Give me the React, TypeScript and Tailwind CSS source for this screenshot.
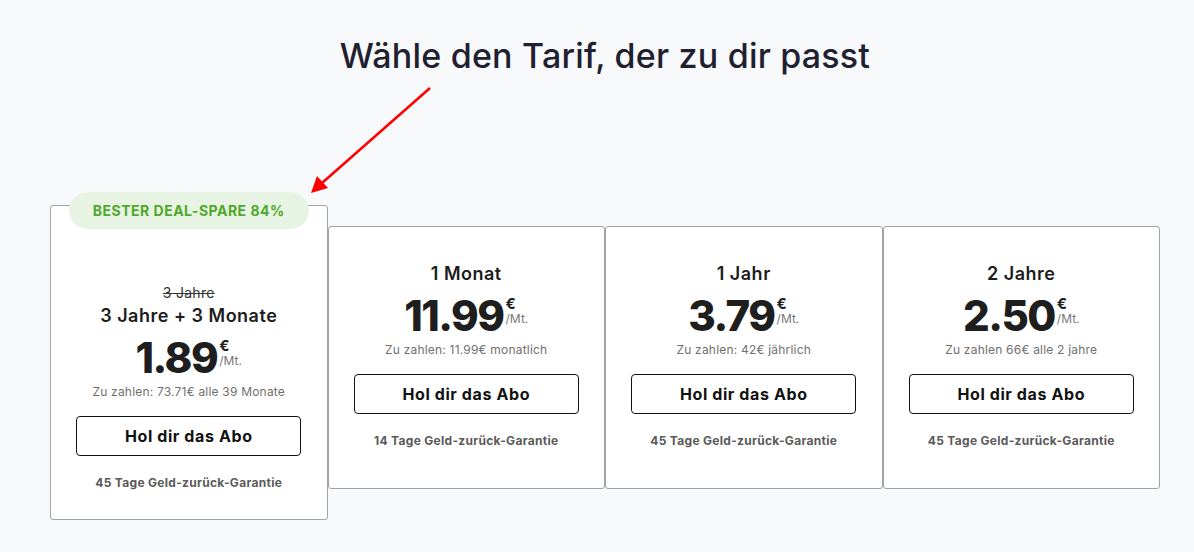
import React from "react";

type Plan = {
  title: string;
  old?: string;
  price: string;
  pay: string;
  guarantee: string;
  best?: boolean;
};

const plans: Plan[] = [
  {
    title: "3 Jahre + 3 Monate",
    old: "3 Jahre",
    price: "1.89",
    pay: "Zu zahlen: 73.71€ alle 39 Monate",
    guarantee: "45 Tage Geld-zurück-Garantie",
    best: true,
  },
  {
    title: "1 Monat",
    price: "11.99",
    pay: "Zu zahlen: 11.99€ monatlich",
    guarantee: "14 Tage Geld-zurück-Garantie",
  },
  {
    title: "1 Jahr",
    price: "3.79",
    pay: "Zu zahlen: 42€ jährlich",
    guarantee: "45 Tage Geld-zurück-Garantie",
  },
  {
    title: "2 Jahre",
    price: "2.50",
    pay: "Zu zahlen 66€ alle 2 jahre",
    guarantee: "45 Tage Geld-zurück-Garantie",
  },
];

function Card({ p }: { p: Plan }) {
  return (
    <div
      className={
        "relative flex flex-col items-center bg-white border border-[#a3a3a3] rounded-[3px] " +
        (p.best ? "pt-[78px] pb-[28px]" : "mt-[21px] pt-[35px] pb-[39px]")
      }
    >
      {p.best && (
        <div className="absolute top-[-14px] left-1/2 -translate-x-1/2 w-[240px] h-[37px] rounded-full bg-[#e8f4e3] flex items-center justify-center text-[14px] font-bold text-[#50a82b] tracking-[0.5px]">
          BESTER DEAL-SPARE 84%
        </div>
      )}
      {p.old && (
        <div className="text-[14px] leading-[18px] text-[#333] line-through mb-[2px] tracking-[0.3px]">{p.old}</div>
      )}
      <div className="text-[18px] leading-[24px] font-semibold text-[#1c1c1c] tracking-[0.5px]">{p.title}</div>
      <div className="mt-[8px] flex items-start h-[44px]">
        <span className="text-[42px] leading-[44px] font-extrabold text-[#1e1e1e] tracking-[-1.5px]">
          {p.price}
        </span>
        <span className="flex flex-col ml-[2px]">
          <span className="text-[15px] leading-[15px] font-bold text-[#1e1e1e] mt-[2px]">€</span>
          <span className="text-[12px] leading-[14px] text-[#777] mt-[1px]">/Mt.</span>
        </span>
      </div>
      <div className="mt-[4px] text-[12px] leading-[16px] text-[#707070] tracking-[0.2px]">{p.pay}</div>
      <button className="mt-[16px] w-[225px] h-[40px] border border-[#111] rounded-[4px] bg-white text-[16px] font-bold text-[#111] tracking-[0.6px]">
        Hol dir das Abo
      </button>
      <div className="mt-[19px] text-[12px] leading-[16px] font-bold text-[#5a5a5a] tracking-[0.3px]">{p.guarantee}</div>
    </div>
  );
}

export default function App() {
  return (
    <div
      className="relative w-[1194px] h-[552px] bg-[#f8f9fb] overflow-hidden"
      style={{ fontFamily: "Inter, 'Noto Sans', 'Liberation Sans', sans-serif" }}
    >
      <div className="pl-[50px] w-[1160px]">
        <h1 className="pt-[36px] text-center text-[34px] leading-[40px] font-medium text-[#1f2030] tracking-[0.2px]">
          Wähle den Tarif, der zu dir passt
        </h1>
        <div className="mt-[129px] grid grid-cols-4 items-start">
          {plans.map((p) => (
            <Card key={p.price} p={p} />
          ))}
        </div>
      </div>
      <svg className="absolute left-0 top-0 pointer-events-none" width="1194" height="552">
        <line x1="430" y1="88" x2="322" y2="183" stroke="#ff0000" strokeWidth="2.5" />
        <polygon points="311,193 317,176 328,188" fill="#ff0000" />
      </svg>
    </div>
  );
}
